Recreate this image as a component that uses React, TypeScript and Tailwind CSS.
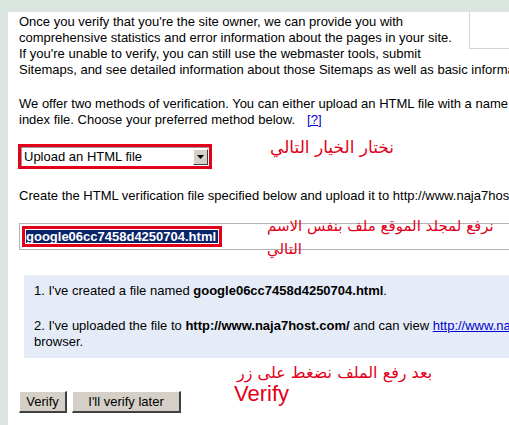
import React from 'react';

const red = 'text-[#e2001a]';

const App: React.FC = () => {
  return (
    <div className="relative w-[509px] h-[425px] overflow-hidden bg-[#dce6e1] pl-[8px] pt-[12px] font-['Liberation_Sans',Arial,sans-serif] text-[13px] leading-[16px] text-black">
      <div className="h-full bg-white pl-[11px] pt-[2px] whitespace-nowrap">
        {/* side box in the corner */}
        <div className="float-right w-[40px] h-[37px] -mt-[2px] border-l border-b border-[#d4d4d4]" />

        <p>
          Once you verify that you're the site owner, we can provide you with
          <br />
          comprehensive statistics and error information about the pages in your site.
          <br />
          If you're unable to verify, you can still use the webmaster tools, submit
          <br />
          Sitemaps, and see detailed information about those Sitemaps as well as basic information about your site.
        </p>

        <p className="mt-[18px]">
          We offer two methods of verification. You can either upload an HTML file with a name we specify, or add a meta tag to your site's
          <br />
          index file. Choose your preferred method below.
          <a href="#" className="ml-[12px] text-[#0000cc] underline">
            [?]
          </a>
        </p>

        {/* method selector */}
        <div className="mt-[16px] -ml-[1px] w-[194px] h-[25px] border-[3px] border-[#e2001a]">
          <div className="flex h-full items-center bg-white border-t border-l border-[#9a9a9a] pl-[2px] pr-[1px]">
            <span className="flex-1">Upload an HTML file</span>
            <span className="flex w-[15px] h-[16px] items-center justify-center bg-[#d4d0c8] border-t border-l border-white border-b border-r border-b-[#404040] border-r-[#404040]">
              <svg width="7" height="4" viewBox="0 0 7 4">
                <path d="M0 0h7L3.5 4z" fill="#000" />
              </svg>
            </span>
          </div>
        </div>

        <p className="mt-[19px]">
          Create the HTML verification file specified below and upload it to http://www.naja7host.com/
        </p>

        {/* file name */}
        <div className="mt-[19px] h-[27px] border-t border-b border-l border-[#b4b4b4] pl-[2px] pt-[2px]">
          <div className="w-[200px] h-[21px] border-[3px] border-[#e2001a]">
            <div className="h-full bg-[#0a246a] border border-white text-white font-bold leading-[13px]">
              google06cc7458d4250704.html
            </div>
          </div>
        </div>

        {/* checklist */}
        <div className="mt-[25px] ml-[5px] h-[83px] bg-[#e5ecf8] pl-[10px] pt-[8px]">
          <p>
            1. I've created a file named <b>google06cc7458d4250704.html</b>.
          </p>
          <p className="mt-[19px]">
            2. I've uploaded the file to <b>http://www.naja7host.com/</b> and can view{' '}
            <a href="#" className="text-[#0000cc] underline">
              http://www.naja7host.com/google06cc7458d4250704.html
            </a>{' '}
            in my
            <br />
            browser.
          </p>
        </div>

        <div className="mt-[33px] flex gap-[5px]">
          <button className="w-[48px] h-[22px] bg-[#d4d0c8] border-t border-l border-white border-b-2 border-r-2 border-b-[#404040] border-r-[#404040]">
            Verify
          </button>
          <button className="w-[109px] h-[22px] bg-[#d4d0c8] border-t border-l border-white border-b-2 border-r-2 border-b-[#404040] border-r-[#404040]">
            I'll verify later
          </button>
        </div>
      </div>

      {/* red notes written over the page */}
      <div dir="rtl" className={`absolute left-[270px] top-[136px] whitespace-nowrap font-['DejaVu_Sans',sans-serif] text-[17px] leading-[22px] ${red}`}>
        نختار الخيار التالي
      </div>
      <div className={`absolute left-[267px] top-[215px] whitespace-nowrap font-['DejaVu_Sans',sans-serif] text-[15px] leading-[23px] ${red}`}>
        <div dir="rtl">نرفع لمجلد الموقع ملف بنفس الاسم</div>
        <div dir="rtl" className="w-fit">التالي</div>
      </div>
      <div dir="rtl" className={`absolute left-[237px] top-[362px] whitespace-nowrap font-['DejaVu_Sans',sans-serif] text-[16px] leading-[22px] ${red}`}>
        بعد رفع الملف نضغط على زر
      </div>
      <div className={`absolute left-[234px] top-[382px] text-[22px] leading-[24px] font-['Liberation_Sans',Arial,sans-serif] ${red}`}>
        Verify
      </div>
    </div>
  );
};

export default App;
